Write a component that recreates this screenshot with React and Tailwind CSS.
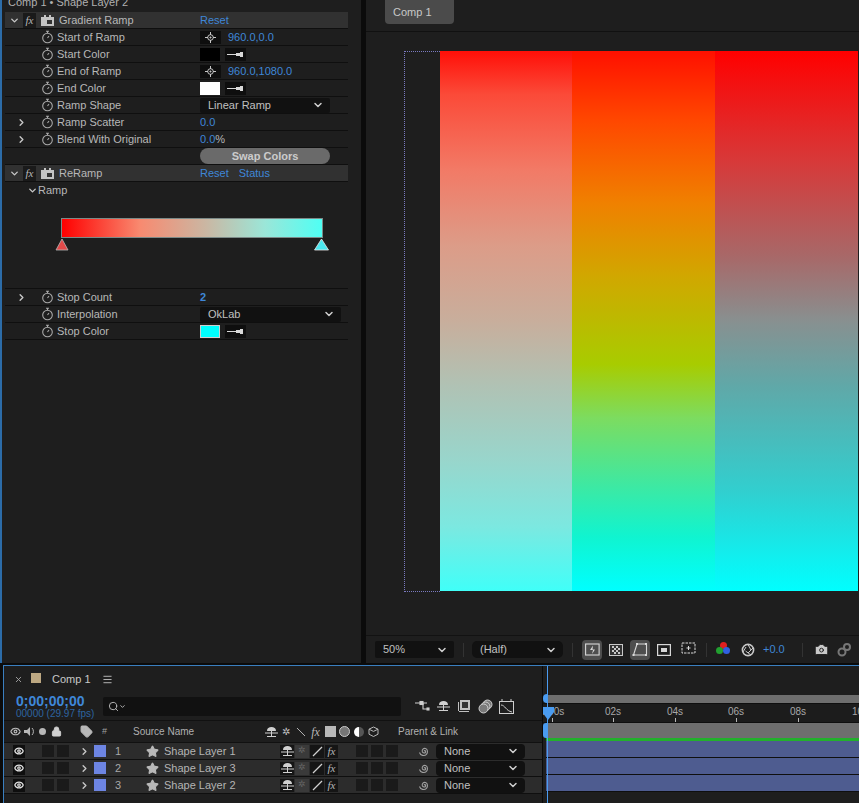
import React from "react";
import { ChevronDown, ChevronRight, Star, Eye, Lock, Tag, Search, Camera, Menu, X } from "lucide-react";

const Stopwatch = () => (
  <svg width="13" height="14" viewBox="0 0 13 14" className="shrink-0" fill="none" stroke="#a8a8a8" strokeWidth="1.1">
    <circle cx="6.5" cy="8" r="4.8" />
    <path d="M5 1.2h3M6.5 1.2v2M6.5 8l1.5-2" />
  </svg>
);

const Dropper = () => (
  <div className="w-[21px] h-[13px] bg-[#0e0e0e] flex items-center justify-center">
    <svg width="19" height="7" viewBox="0 0 19 7">
      <path d="M1 3h9V2h4V1h3v5h-3V5h-4V4H1z" fill="#d8d8d8" />
    </svg>
  </div>
);

const Crosshair = () => (
  <div className="w-[21px] h-[13px] bg-[#0e0e0e] flex items-center justify-center">
    <svg width="11" height="11" viewBox="0 0 11 11" fill="none" stroke="#c8c8c8" strokeWidth="1">
      <circle cx="5.5" cy="5.5" r="2.8" />
      <path d="M5.5 0v3M5.5 8v3M0 5.5h3M8 5.5h3" />
      <circle cx="5.5" cy="5.5" r="0.6" fill="#c8c8c8" />
    </svg>
  </div>
);

const Row = ({ arrow, label, children }) => (
  <div className="h-[17px] flex items-center border-b border-[#0f0f0f] pr-0 w-[343px] ml-[3px]">
    <div className="w-[22px] flex justify-end pr-[1px] shrink-0 ml-[1px]">
      {arrow && <ChevronRight size={11} strokeWidth={3} color="#c8c8c8" />}
    </div>
    <div className="ml-[13px] flex items-center gap-[3px] w-[159px] shrink-0 -translate-x-[0px]">
      <Stopwatch />
      <span className="text-[11px] text-[#b8b8b8] whitespace-nowrap">{label}</span>
    </div>
    {children}
  </div>
);

const Blue = ({ children, className = "" }) => (
  <span className={`text-[11px] text-[#3f87d8] ${className}`}>{children}</span>
);

const FxHeader = ({ name, status }) => (
  <div className="h-[17px] flex items-center bg-[#313131] w-[343px] ml-[3px] border-b border-[#0f0f0f]">
    <ChevronDown size={11} strokeWidth={3} color="#c8c8c8" className="ml-[4px] shrink-0" />
    <div className="w-[13px] h-[15px] bg-[#1a1a1a] ml-[3px] flex items-center justify-center shrink-0">
      <span className="text-[11px] italic text-[#b8b8b8] font-['Liberation_Serif',serif]">fx</span>
    </div>
    <svg width="13" height="11" viewBox="0 0 13 11" className="ml-[5px] shrink-0">
      <path d="M0 2h3V0h2v2h3V0h2v2h3v9H0z" fill="#c4c4c4" />
      <rect x="6" y="5" width="5" height="4" fill="#333" />
    </svg>
    <span className="text-[11px] text-[#b8b8b8] ml-[5px] w-[141px] shrink-0">{name}</span>
    <Blue>Reset</Blue>
    {status && <Blue className="ml-[10px]">Status</Blue>}
  </div>
);

const Select = ({ label, w, className = "" }) => (
  <div className={`h-[15px] bg-[#111111] rounded-[2px] flex items-center justify-between pl-[8px] pr-[6px] shrink-0 ${className}`} style={{ width: w }}>
    <span className="text-[11px] text-[#c0c0c0]">{label}</span>
    <ChevronDown size={12} strokeWidth={3} color="#cfcfcf" />
  </div>
);

const EffectControls = () => (
  <div className="w-[361px] bg-[#1e1e1e] border-l-2 border-[#2c6ca8] shrink-0 flex flex-col overflow-hidden h-full">
    <div className="h-[12px] flex items-end -mt-[3px] pl-[6px] shrink-0">
      <span className="text-[11px] leading-[13px] text-[#b0b0b0] whitespace-nowrap">Comp 1 • Shape Layer 2</span>
    </div>
    <div className="h-[3px] shrink-0" />
    <FxHeader name="Gradient Ramp" />
    <Row label="Start of Ramp"><Crosshair /><Blue className="ml-[7px]">960.0,0.0</Blue></Row>
    <Row label="Start Color"><div className="w-[20px] h-[13px] bg-black" /><div className="ml-[5px]"><Dropper /></div></Row>
    <Row label="End of Ramp"><Crosshair /><Blue className="ml-[7px]">960.0,1080.0</Blue></Row>
    <Row label="End Color"><div className="w-[20px] h-[13px] bg-white" /><div className="ml-[5px]"><Dropper /></div></Row>
    <Row label="Ramp Shape"><Select label="Linear Ramp" w={130} /></Row>
    <Row arrow label="Ramp Scatter"><Blue>0.0</Blue></Row>
    <Row arrow label="Blend With Original"><Blue>0.0</Blue><span className="text-[11px] text-[#b8b8b8]">%</span></Row>
    <div className="h-[17px] flex items-center border-b border-[#0f0f0f] w-[343px] ml-[3px] pl-[195px]">
      <div className="w-[130px] h-[16px] bg-[#6a6a6a] rounded-full flex items-center justify-center text-[11px] font-bold text-[#cccccc]">Swap Colors</div>
    </div>
    <FxHeader name="ReRamp" status />
    <div className="h-[107px] border-b border-[#0f0f0f] w-[343px] ml-[3px] relative">
      <div className="flex items-center h-[17px] pl-[22px]">
        <ChevronDown size={11} strokeWidth={3} color="#c8c8c8" />
        <span className="text-[11px] text-[#b8b8b8]">Ramp</span>
      </div>
      <div className="absolute left-[56px] top-[36px] w-[262px] h-[20px] border border-[#7c8a88] bg-[linear-gradient(to_right,#ff0000,#f88a70_30%,#cbb6a2_55%,#9be6d8_78%,#4ffff4)]" />
      <svg className="absolute left-[50px] top-[57px]" width="14" height="12" viewBox="0 0 14 12"><path d="M7 0l6 11H1z" fill="#e24a4a" stroke="#b8b8b8" strokeWidth="0.8" /></svg>
      <svg className="absolute left-[309px] top-[57px]" width="15" height="12" viewBox="0 0 15 12"><path d="M7.5 0l7 11H.5z" fill="#4be8f0" stroke="#e8e8e8" strokeWidth="0.8" /></svg>
    </div>
    <Row arrow label="Stop Count"><Blue className="font-bold">2</Blue></Row>
    <Row label="Interpolation"><Select label="OkLab" w={141} /></Row>
    <Row label="Stop Color"><div className="w-[18px] h-[11px] bg-[#00ffff] border border-[#cfcfcf] box-content" /><div className="ml-[5px]"><Dropper /></div></Row>
  </div>
);

const Tool = ({ active, children }) => (
  <div className={`w-[20px] h-[20px] rounded-[4px] flex items-center justify-center shrink-0 ${active ? "bg-[#4e4e4e]" : ""}`}>{children}</div>
);

const ViewerBar = () => (
  <div className="h-[28px] mt-auto flex items-center pl-[9px] bg-[#1e1e1e] border-t border-[#121212] shrink-0 overflow-hidden">
    <Select label="50%" w={79} className="h-[17px]" />
    <div className="w-[1px] h-[14px] bg-[#333] ml-[9px]" />
    <Select label="(Half)" w={91} className="ml-[8px] h-[17px] rounded-[5px]" />
    <div className="w-[1px] h-[14px] bg-[#333] ml-[9px]" />
    <div className="ml-[9px] flex items-center gap-[4px]">
      <Tool active><svg width="15" height="14" viewBox="0 0 15 14" fill="none" stroke="#d8d8d8" strokeWidth="1.1"><rect x=".6" y="1" width="13.5" height="11" /><path d="M8 2.5L5 7h3l-1 4 3-4.5H7.5z" fill="#d8d8d8" stroke="none" /></svg></Tool>
      <Tool><svg width="14" height="12" viewBox="0 0 14 12"><rect x=".5" y=".5" width="13" height="11" fill="#333" stroke="#c8c8c8" /><path d="M3 2h2v2H3zM7 2h2v2H7zM5 4h2v2H5zM9 4h2v2H9zM3 6h2v2H3zM7 6h2v2H7zM5 8h2v2H5zM9 8h2v2H9z" fill="#c8c8c8" /></svg></Tool>
      <Tool active><svg width="16" height="15" viewBox="0 0 16 15" fill="none" stroke="#d8d8d8" strokeWidth="1.1"><path d="M5 2h9.5v11H1.5z" /><path d="M4 1h2v2H4zM13 1h2v2h-2zM0.5 12h2v2h-2zM13 12h2v2h-2z" fill="#d8d8d8" stroke="none" /></svg></Tool>
      <Tool><svg width="14" height="12" viewBox="0 0 14 12" fill="none" stroke="#d8d8d8" strokeWidth="1.2"><rect x=".6" y=".6" width="12.8" height="10.8" /><rect x="4" y="4" width="6" height="4" fill="#d8d8d8" stroke="none" /></svg></Tool>
      <Tool><svg width="15" height="15" viewBox="0 0 15 15" fill="none" stroke="#d8d8d8" strokeWidth="1" strokeDasharray="2.5 1"><rect x="1" y="1" width="13" height="10" /><path d="M7.5 4v4M5.5 6h4" strokeDasharray="none" /></svg></Tool>
    </div>
    <div className="w-[1px] h-[14px] bg-[#333] ml-[8px]" />
    <div className="ml-[9px] shrink-0 w-[15px] h-[15px] relative">
      <div className="absolute left-[4px] top-0 w-[7px] h-[7px] rounded-full bg-[#e02020]" />
      <div className="absolute left-0 top-[5px] w-[7px] h-[7px] rounded-full bg-[#22a030]" />
      <div className="absolute left-[7px] top-[5px] w-[7px] h-[7px] rounded-full bg-[#3060e0]" />
    </div>
    <svg className="ml-[10px] shrink-0" width="14" height="14" viewBox="0 0 14 14" fill="none" stroke="#c8c8c8" strokeWidth="1.6"><circle cx="7" cy="7" r="5.6" /><path d="M7 1.5L10 7M12 5L7 10M10 12L4.5 8M2 9l3-5" strokeWidth="1" /></svg>
    <span className="ml-[8px] text-[11px] text-[#3f87d8] shrink-0">+0.0</span>
    <div className="w-[1px] h-[14px] bg-[#333] ml-[17px] shrink-0" />
    <Camera size={15} fill="#c8c8c8" color="#1e1e1e" strokeWidth={1.5} className="ml-[11px] shrink-0" />
    <svg className="ml-[8px] shrink-0" width="17" height="15" viewBox="0 0 17 15" fill="none" stroke="#777" strokeWidth="2"><circle cx="10" cy="5" r="3" /><circle cx="5" cy="10" r="3.5" /></svg>
  </div>
);

const Viewer = () => (
  <div className="flex-1 min-w-0 flex flex-col bg-[#1e1e1e] h-full overflow-hidden">
    <div className="h-[32px] border-b border-[#111111] pl-[19px] shrink-0">
      <div className="w-[69px] h-[24px] bg-[#4b4b4b] rounded-b-[4px] flex items-center pl-[8px] text-[11px] text-[#c8c8c8]">Comp 1</div>
    </div>
    <div className="pl-[38px] pt-[19px] flex-1 min-h-0">
      <div className="flex w-[600px] h-[541px] relative">
        <div className="w-[36px] h-[541px] border border-dotted border-[#7a7ac0] border-r-0 shrink-0" />
        <div className="w-[132px] h-[540px] shrink-0 bg-[linear-gradient(to_bottom,#ff0f08,#fb4a38_8%,#f27a66_22%,#dc9c88_36%,#c8ae9c_50%,#b0c2b4_62%,#98d6cc_76%,#7ce8e0_88%,#40fff8)]" />
        <div className="w-[143px] h-[540px] shrink-0 bg-[linear-gradient(to_bottom,#ff1000,#ff4800_13%,#f08000_28%,#d0a800_42%,#a8cc00_58%,#7cdc60_68%,#40e8a0_80%,#10f4d0_90%,#00ffff)]" />
        <div className="w-[143px] h-[540px] shrink-0 bg-[linear-gradient(to_bottom,#ff0000,#d83838_20%,#a86868_38%,#889090_50%,#60a8a8_62%,#30d0d0_82%,#00ffff)]" />
      </div>
    </div>
    <ViewerBar />
  </div>
);

const G = ({ children, w = 17 }) => <div className="flex items-center justify-center shrink-0" style={{ width: w }}>{children}</div>;

const Mush = ({ c = "#d0d0d0" }) => (
  <svg width="13" height="12" viewBox="0 0 13 12"><path d="M2 5c0-3 2-4 4.5-4S11 2 11 5zM6 5h1v5H6zM0 6.5h13v1H0zM2 10h9v1H2z" fill={c} /></svg>
);

const LayerRow = ({ n, name }) => (
  <div className="h-[17px] flex items-center border-b border-[#0f0f0f] bg-[#2c2c2c]">
    <div className="w-[12px] h-[13px] bg-[#0e0e0e] ml-[9px] flex items-center justify-center"><Eye size={10} color="#e0e0e0" strokeWidth={3} /></div>
    <div className="ml-[17px] w-[12px] h-[12px] bg-[#1a1a1a]" />
    <div className="ml-[3px] w-[12px] h-[12px] bg-[#1a1a1a]" />
    <ChevronRight size={11} strokeWidth={3} color="#c8c8c8" className="ml-[10px]" />
    <div className="ml-[4px] w-[12px] h-[12px] bg-[#6d85e3]" />
    <span className="ml-[9px] w-[22px] text-[11px] text-[#a8a8a8]">{n}</span>
    <Star size={13} fill="#b8b8b8" color="#b8b8b8" className="ml-[9px]" />
    <span className="ml-[5px] w-[116px] text-[11px] text-[#b4b4b4] whitespace-nowrap">{name}</span>
    <div className="w-[14px] h-[13px] flex items-center justify-center bg-[#151515] shrink-0"><Mush /></div>
    <div className="w-[14px] h-[13px] ml-[1px] bg-[#3a3a3a] flex items-center justify-center text-[9px] text-[#666] shrink-0">✲</div>
    <div className="w-[14px] h-[13px] ml-[1px] bg-[#151515] shrink-0 flex items-center justify-center"><svg width="11" height="11" viewBox="0 0 11 11"><path d="M1 10L10 1" stroke="#d0d0d0" strokeWidth="1.2" /></svg></div>
    <div className="w-[13px] h-[13px] ml-[1px] bg-[#151515] shrink-0 flex items-center justify-center text-[11px] italic text-[#b8b8b8] font-['Liberation_Serif',serif]">fx</div>
    <div className="ml-[18px] w-[12px] h-[12px] bg-[#1a1a1a] shrink-0" />
    <div className="ml-[3px] w-[12px] h-[12px] bg-[#1a1a1a] shrink-0" />
    <div className="ml-[3px] w-[12px] h-[12px] bg-[#1a1a1a] shrink-0" />
    <svg className="ml-[20px] shrink-0" width="12" height="12" viewBox="0 0 12 12" fill="none" stroke="#a0a0a0" strokeWidth="1.1"><path d="M6 6c1-1 2 0 1.500 1.200C7 8.500 4.800 8.300 4.300 6.500 3.800 4.500 5.500 3 7.500 3.500 9.800 4.200 10 7.500 8.500 9.300 6.500 11.300 2.500 10.800 1.500 7.500" /></svg>
    <Select label="None" w={89} className="ml-[6px] h-[15px] rounded-[4px] pl-[7px]" />
  </div>
);

const Timeline = () => (
  <div className="flex-1 min-h-0 border-t border-l border-[#3a7fc0] bg-[#1e1e1e] ml-[3px] flex overflow-hidden">
    <div className="w-[538px] shrink-0 flex flex-col">
      <div className="h-[26px] flex items-center pl-[10px] shrink-0">
        <X size={9} color="#a0a0a0" strokeWidth={2.5} />
        <div className="ml-[8px] w-[10px] h-[10px] bg-[#bda882] -translate-y-[1px]" />
        <span className="ml-[11px] text-[11px] text-[#c8c8c8]">Comp 1</span>
        <Menu size={11} color="#c0c0c0" className="ml-[11px]" />
      </div>
      <div className="h-[29px] flex items-center shrink-0 border-b border-[#111111]">
        <div className="w-[99px] shrink-0 pl-[12px] flex flex-col">
          <span className="text-[14px] leading-[14px] font-bold text-[#3f87d8] whitespace-nowrap">0;00;00;00</span>
          <span className="text-[10px] leading-[11px] text-[#2d64a0] whitespace-nowrap">00000 (29.97 fps)</span>
        </div>
        <div className="w-[298px] h-[19px] bg-[#111111] rounded-[2px] flex items-center pl-[5px] shrink-0">
          <Search size={11} color="#c0c0c0" />
          <ChevronDown size={7} color="#c0c0c0" strokeWidth={3} />
        </div>
        <div className="ml-[13px] flex items-center gap-[3px]">
          <G w={17}><svg width="15" height="12" viewBox="0 0 15 12" fill="none" stroke="#cfcfcf" strokeWidth="1.1"><path d="M0 3h6M6 3l2 0v6h4M12 3H8" /><rect x="5" y="1.500" width="3" height="3" fill="#cfcfcf" /><rect x="12" y="8" width="2" height="2" fill="#cfcfcf" /></svg></G>
          <G w={18}><Mush /></G>
          <G w={18}><svg width="14" height="14" viewBox="0 0 14 14"><path d="M3 1h10v10H3zM1 3h1v10h10v-1H1z" fill="#c0c0c0" /><path d="M5 3h6v6H5z" fill="#333" /></svg></G>
          <G w={18}><svg width="15" height="15" viewBox="0 0 15 15" fill="#7a7a7a" stroke="#cfcfcf"><circle cx="9.500" cy="5.500" r="4.500" /><circle cx="7.500" cy="7.500" r="4.500" /><circle cx="5.500" cy="9.500" r="4.500" /></svg></G>
          <G w={18}><svg width="15" height="15" viewBox="0 0 15 15" fill="none" stroke="#cfcfcf"><rect x=".5" y="2.500" width="14" height="12" /><path d="M3 0v3M12 0v3M2 6c4 0 5 6 11 7" /></svg></G>
        </div>
      </div>
      <div className="h-[22px] flex items-center shrink-0 border-b border-[#111111]">
        <Eye size={11} color="#b8b8b8" strokeWidth={2.5} className="ml-[6px]" />
        <svg className="ml-[3px]" width="11" height="11" viewBox="0 0 11 11"><path d="M0 4h3l3-3v9L3 7H0z" fill="#b8b8b8" /><path d="M8 2a5 5 0 0 1 0 7" stroke="#b8b8b8" fill="none" /></svg>
        <div className="ml-[4px] w-[7px] h-[7px] rounded-full bg-[#b8b8b8]" />
        <Lock size={11} color="#d0d0d0" fill="#d0d0d0" className="ml-[5px]" />
        <Tag size={13} color="#b8b8b8" fill="#b8b8b8" className="ml-[18px]" />
        <span className="ml-[9px] text-[9px] text-[#a0a0a0] w-[31px]">#</span>
        <span className="text-[10px] text-[#b0b0b0] w-[131px] whitespace-nowrap">Source Name</span>
        <G w={14}><Mush /></G>
        <G w={15}><span className="text-[10px] text-[#c0c0c0]">✲</span></G>
        <G w={15}><svg width="10" height="10" viewBox="0 0 10 10"><path d="M1 1l8 8" stroke="#b0b0b0" /></svg></G>
        <G w={15}><span className="text-[12px] italic text-[#b8b8b8] font-['Liberation_Serif',serif]">fx</span></G>
        <G w={14}><div className="w-[11px] h-[11px] bg-[#b8b8b8]" /></G>
        <G w={14}><div className="w-[11px] h-[11px] rounded-full bg-[#777] border border-[#ccc]" /></G>
        <G w={15}><div className="w-[10px] h-[10px] rounded-full bg-[linear-gradient(to_right,#fff_50%,#555_50%)]" /></G>
        <G w={14}><svg width="11" height="11" viewBox="0 0 11 11" fill="none" stroke="#b8b8b8"><path d="M5.500 1l4.500 2.200v5L5.500 10.500 1 8.200v-5zM1 3.200l4.500 2.200 4.500-2.200" /></svg></G>
        <span className="ml-[18px] text-[10px] text-[#b0b0b0] whitespace-nowrap">Parent &amp; Link</span>
      </div>
      <LayerRow n="1" name="Shape Layer 1" />
      <LayerRow n="2" name="Shape Layer 3" />
      <LayerRow n="3" name="Shape Layer 2" />
    </div>
    <div className="flex-1 min-w-0 relative flex flex-col border-l border-[#0a0a0a] overflow-hidden">
      <div className="h-[29px] shrink-0" />
      <div className="h-[8px] bg-[#6e6e6e] ml-[3px] shrink-0 mt-[0px]" />
      <div className="h-[20px] border-y border-[#0f0f0f] shrink-0 flex text-[10px] text-[#a8a8a8] relative bg-[#1c1c1c]">
        {[["02s", 61], ["04s", 123], ["06s", 184], ["08s", 246], ["10s", 308], ["0:00s", 0]].map(([t, x]) => (
          <div key={t} className="absolute top-[1px] w-[24px] flex flex-col items-center" style={{ left: x - 3 }}>
            <span className="leading-[13px] whitespace-nowrap">{t}</span>
            <div className="w-[1px] h-[4px] bg-[#b8b8b8]" />
          </div>
        ))}
      </div>
      <div className="h-[15px] bg-[#6e6e6e] ml-[3px] shrink-0" />
      <div className="h-[3px] bg-[#22b02c] ml-[3px] shrink-0" />
      <div className="h-[16px] bg-[#4e5c90] ml-[3px] border-b border-[#0f0f0f] box-content shrink-0" />
      <div className="h-[16px] bg-[#4e5c90] ml-[3px] border-b border-[#0f0f0f] box-content shrink-0" />
      <div className="h-[16px] bg-[#4e5c90] ml-[3px] border-b border-[#0f0f0f] box-content shrink-0" />
      <div className="absolute left-[4px] top-0 bottom-0 w-[1px] bg-[#4a9bf0]" />
      <div className="absolute left-0 top-[28px] w-[4px] h-[9px] rounded-l-full bg-[#4a9bf0]" />
      <div className="absolute left-0 top-[57px] w-[4px] h-[15px] rounded-l-[3px] bg-[#4a9bf0]" />
      <svg className="absolute left-[-1px] top-[41px]" width="12" height="13" viewBox="0 0 12 13"><path d="M0 0h12v5L6 13 0 5z" fill="#4a9bf0" /></svg>
    </div>
  </div>
);

export default function App() {
  return (
    <div className="w-[859px] h-[803px] bg-[#0b0b0b] overflow-hidden flex flex-col font-['Liberation_Sans',sans-serif]">
      <div className="h-[663px] flex shrink-0 gap-[5px]">
        <EffectControls />
        <Viewer />
      </div>
      <div className="h-[2px] shrink-0" />
      <Timeline />
    </div>
  );
}
